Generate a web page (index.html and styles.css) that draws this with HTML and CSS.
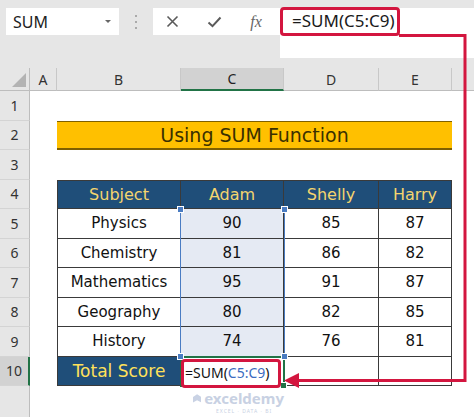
FILE: index.html
```html
<!DOCTYPE html>
<html>
<head>
<meta charset="utf-8">
<link rel="stylesheet" href="styles.css">
</head>
<body>
<div class="app">
  <div class="toolbar">
    <div class="namebox"><span class="nb-text">SUM</span><span class="caret"></span></div>
    <div class="grip"><i></i><i></i><i></i></div>
    <div class="fbtns">
      <span class="slot"><svg width="13" height="13" viewBox="0 0 13 13"><path d="M1.5 1.5 L11.5 11.5 M11.5 1.5 L1.5 11.5" stroke="#5a5a5a" stroke-width="1.6" fill="none"/></svg></span>
      <span class="slot"><svg width="15" height="12" viewBox="0 0 15 12"><path d="M1.5 6.5 L5.5 10.2 L13.5 1.5" stroke="#5a5a5a" stroke-width="2" fill="none"/></svg></span>
      <span class="slot fx">fx</span>
    </div>
    <div class="fbar"><span class="ftext">=SUM(C5:C9)</span></div>
  </div>

  <div class="sheet">
    <!-- header row -->
    <div class="corner"><span class="tri"></span></div>
    <div class="ch">A</div>
    <div class="ch">B</div>
    <div class="ch on">C</div>
    <div class="ch">D</div>
    <div class="ch">E</div>
    <div class="ch last"></div>

    <!-- row 1 -->
    <div class="rh">1</div><div></div><div></div><div></div><div></div><div></div><div></div>
    <!-- row 2 -->
    <div class="rh">2</div><div></div><div class="title">Using SUM Function</div><div></div>
    <!-- row 3 -->
    <div class="rh">3</div><div></div><div></div><div></div><div></div><div></div><div></div>
    <!-- row 4 -->
    <div class="rh">4</div><div></div>
    <div class="t hd first top">Subject</div>
    <div class="t hd top">Adam</div>
    <div class="t hd top">Shelly</div>
    <div class="t hd top">Harry</div>
    <div></div>
    <!-- row 5 -->
    <div class="rh">5</div><div></div>
    <div class="t first">Physics</div><div class="t hl">90</div><div class="t">85</div><div class="t">87</div><div></div>
    <!-- row 6 -->
    <div class="rh">6</div><div></div>
    <div class="t first">Chemistry</div><div class="t hl">81</div><div class="t">86</div><div class="t">82</div><div></div>
    <!-- row 7 -->
    <div class="rh">7</div><div></div>
    <div class="t first">Mathematics</div><div class="t hl">95</div><div class="t">91</div><div class="t">87</div><div></div>
    <!-- row 8 -->
    <div class="rh">8</div><div></div>
    <div class="t first">Geography</div><div class="t hl">80</div><div class="t">82</div><div class="t">85</div><div></div>
    <!-- row 9 -->
    <div class="rh">9</div><div></div>
    <div class="t first">History</div><div class="t hl">74</div><div class="t">76</div><div class="t">81</div><div></div>
    <!-- row 10 -->
    <div class="rh on">10</div><div></div>
    <div class="t hd tot first">Total Score</div>
    <div class="t cf"><span class="redbox">=SUM(<span class="ref">C5:C9</span>)</span></div>
    <div class="t"></div><div class="t"></div><div></div>
    <!-- row 11 -->
    <div class="rh rest"></div><div></div><div></div>
    <div class="wm">
      <svg class="wm-logo" width="12" height="14" viewBox="0 0 12 14"><path d="M6 0 L12 4 L12 12 L6 9 L0 12 L0 4 Z" fill="#c9d2e4"/></svg>
      <span class="wm-txt"><span class="wm-big">exceldemy</span><span class="wm-small">EXCEL · DATA · BI</span></span>
    </div>
    <div></div><div></div><div></div>

    <!-- overlays (absolutely positioned inside their grid areas) -->
    <div class="selbox"><i class="h tl"></i><i class="h tr"></i><i class="h bl"></i><i class="h br"></i></div>
    <div class="active"><i class="fill"></i></div>
  </div>

  <svg class="connector" width="474" height="417" viewBox="0 0 474 417">
    <polyline points="399,35.5 465,35.5 465,380.5 296,380.5" fill="none" stroke="#d3163f" stroke-width="3"/>
    <polygon points="284,380.5 299,373 299,388" fill="#d3163f"/>
  </svg>
</div>
</body>
</html>
```

FILE: styles.css
```css
html, body {
  margin: 0;
  padding: 0;
  background: #ffffff;
}

.app {
  position: relative;
  width: 474px;
  height: 417px;
  overflow: hidden;
  background: #e6e6e6;
  font-family: "Noto Sans", "DejaVu Sans", sans-serif;
}

/* ---------- toolbar ---------- */
.toolbar {
  display: flex;
  align-items: flex-start;
  height: 68px;
  padding-top: 8px;
  box-sizing: border-box;
}

.namebox {
  margin-left: 6px;
  width: 113px;
  height: 27px;
  box-sizing: border-box;
  background: #ffffff;
  display: flex;
  align-items: center;
  justify-content: space-between;
  padding: 0 8px 0 7px;
}

.nb-text {
  font-size: 16px;
  color: #222;
}

.caret {
  width: 0;
  height: 0;
  border-left: 3px solid transparent;
  border-right: 3px solid transparent;
  border-top: 3px solid #666;
}

.grip {
  width: 34px;
  height: 27px;
  display: flex;
  flex-direction: column;
  align-items: center;
  justify-content: center;
  gap: 4px;
}

.grip i {
  display: block;
  width: 2px;
  height: 2px;
  background: #aaaaaa;
}

.fbtns {
  width: 127px;
  height: 27px;
  background: #ffffff;
  display: flex;
  align-items: center;
  padding-left: 10px;
  gap: 24px;
  box-sizing: border-box;
}

.slot {
  width: 18px;
  display: flex;
  justify-content: center;
  align-items: center;
}

.fx {
  font-family: "Liberation Serif", serif;
  font-style: italic;
  font-size: 16px;
  color: #666;
}

.fbar {
  flex: 1;
  height: 50px;
  background: #ffffff;
}

.ftext {
  display: block;
  width: 120px;
  height: 29px;
  margin-top: -1px;
  box-sizing: border-box;
  border: 3px solid #d3163f;
  border-radius: 4px;
  padding-left: 9px;
  font-size: 17px;
  line-height: 22px;
  color: #1a1a1a;
  white-space: nowrap;
}

/* ---------- sheet grid ---------- */
.sheet {
  display: grid;
  grid-template-columns: 30px 27px 124px 103px 95px 73px 1fr;
  grid-template-rows: 23px repeat(10, 29.5px) 1fr;
  height: 349px;
  background: #ffffff;
  position: relative;
}

.corner {
  background: #e6e6e6;
  border-right: 1px solid #bdbdbd;
  border-bottom: 1px solid #bdbdbd;
  position: relative;
}

.tri {
  position: absolute;
  right: 3px;
  bottom: 3px;
  width: 0;
  height: 0;
  border-left: 14px solid transparent;
  border-bottom: 14px solid #b3b3b3;
}

.ch {
  background: #e6e6e6;
  border-right: 1px solid #c8c8c8;
  border-bottom: 1px solid #bdbdbd;
  display: flex;
  align-items: center;
  justify-content: center;
  font-size: 14px;
  color: #333;
}

.ch.on {
  background: #d2d2d2;
  border-bottom: 2px solid #217346;
  color: #222;
}

.ch.last {
  border-right: none;
}

.rh {
  background: #e6e6e6;
  border-right: 1px solid #bdbdbd;
  border-bottom: 1px solid #d4d4d4;
  display: flex;
  align-items: center;
  justify-content: center;
  font-size: 14px;
  color: #333;
}

.rh.on {
  background: #d2d2d2;
  border-right: 2px solid #217346;
}

.rh.rest {
  border-bottom: none;
}

/* title */
.title {
  grid-column: span 4;
  background: #ffc000;
  border-top: 1px solid #7f6000;
  border-bottom: 2px solid #7f6000;
  display: flex;
  align-items: center;
  justify-content: center;
  font-family: "Comic Sans MS", "DejaVu Sans", sans-serif;
  font-size: 19px;
  color: #3a3000;
}

/* table */
.t {
  border-right: 1px solid #3a3a3a;
  border-bottom: 1px solid #3a3a3a;
  display: flex;
  align-items: center;
  justify-content: center;
  font-family: "Comic Sans MS", "DejaVu Sans", sans-serif;
  font-size: 15px;
  color: #111;
  background: #ffffff;
}

.t.first {
  border-left: 1px solid #3a3a3a;
}

.t.top {
  border-top: 1px solid #3a3a3a;
}

.t.hd {
  background: #1f4e79;
  color: #f4d56e;
  font-size: 16px;
}

.t.tot {
  color: #ffe15a;
  font-size: 17px;
}

.t.hl {
  background: #e5eaf3;
}

.t.cf {
  justify-content: flex-start;
  align-items: flex-start;
}

.redbox {
  display: block;
  width: 100px;
  height: 29px;
  margin-top: 2px;
  box-sizing: border-box;
  border: 3px solid #d3163f;
  border-radius: 4px;
  padding-left: 1px;
  font-family: "Noto Sans", sans-serif;
  font-size: 14px;
  line-height: 22px;
  color: #111;
  white-space: nowrap;
  position: relative;
  z-index: 3;
}

.ref {
  color: #3b6cc0;
}

/* overlays: absolutely positioned children of the grid, sized by their grid area */
.selbox {
  grid-column: 4 / 5;
  grid-row: 6 / 11;
  position: absolute;
  top: 0;
  bottom: 0;
  left: -1px;
  right: -1px;
  border-left: 1.5px solid #4a7cc2;
  border-right: 1.5px solid #4a7cc2;
  z-index: 2;
}

.h {
  position: absolute;
  width: 5px;
  height: 5px;
  background: #4a7cc2;
  border: 1px solid #ffffff;
}

.h.tl { left: -4px; top: -3px; }
.h.tr { right: -4px; top: -3px; }
.h.bl { left: -4px; bottom: -3px; }
.h.br { right: -4px; bottom: -3px; }

.active {
  grid-column: 4 / 5;
  grid-row: 11 / 12;
  position: absolute;
  top: -1px;
  bottom: -1px;
  left: -1px;
  right: -1px;
  border: 2px solid #217346;
  z-index: 1;
}

.fill {
  position: absolute;
  right: -4px;
  bottom: -4px;
  width: 5px;
  height: 5px;
  background: #217346;
  border: 1px solid #ffffff;
}

.wm {
  display: flex;
  align-items: flex-start;
  gap: 3px;
  padding: 2px 0 0 12px;
}

.wm-logo {
  margin-top: 4px;
}

.wm-txt {
  display: flex;
  flex-direction: column;
  align-items: center;
}

.wm-big {
  font-family: "Noto Sans", sans-serif;
  font-weight: 700;
  font-size: 15px;
  line-height: 20px;
  color: #c8d1e3;
}

.wm-small {
  font-family: "Noto Sans", sans-serif;
  font-size: 5px;
  line-height: 7px;
  letter-spacing: 1px;
  color: #c8d1e3;
}

.connector {
  position: absolute;
  left: 0;
  top: 0;
  z-index: 5;
  pointer-events: none;
}
```
